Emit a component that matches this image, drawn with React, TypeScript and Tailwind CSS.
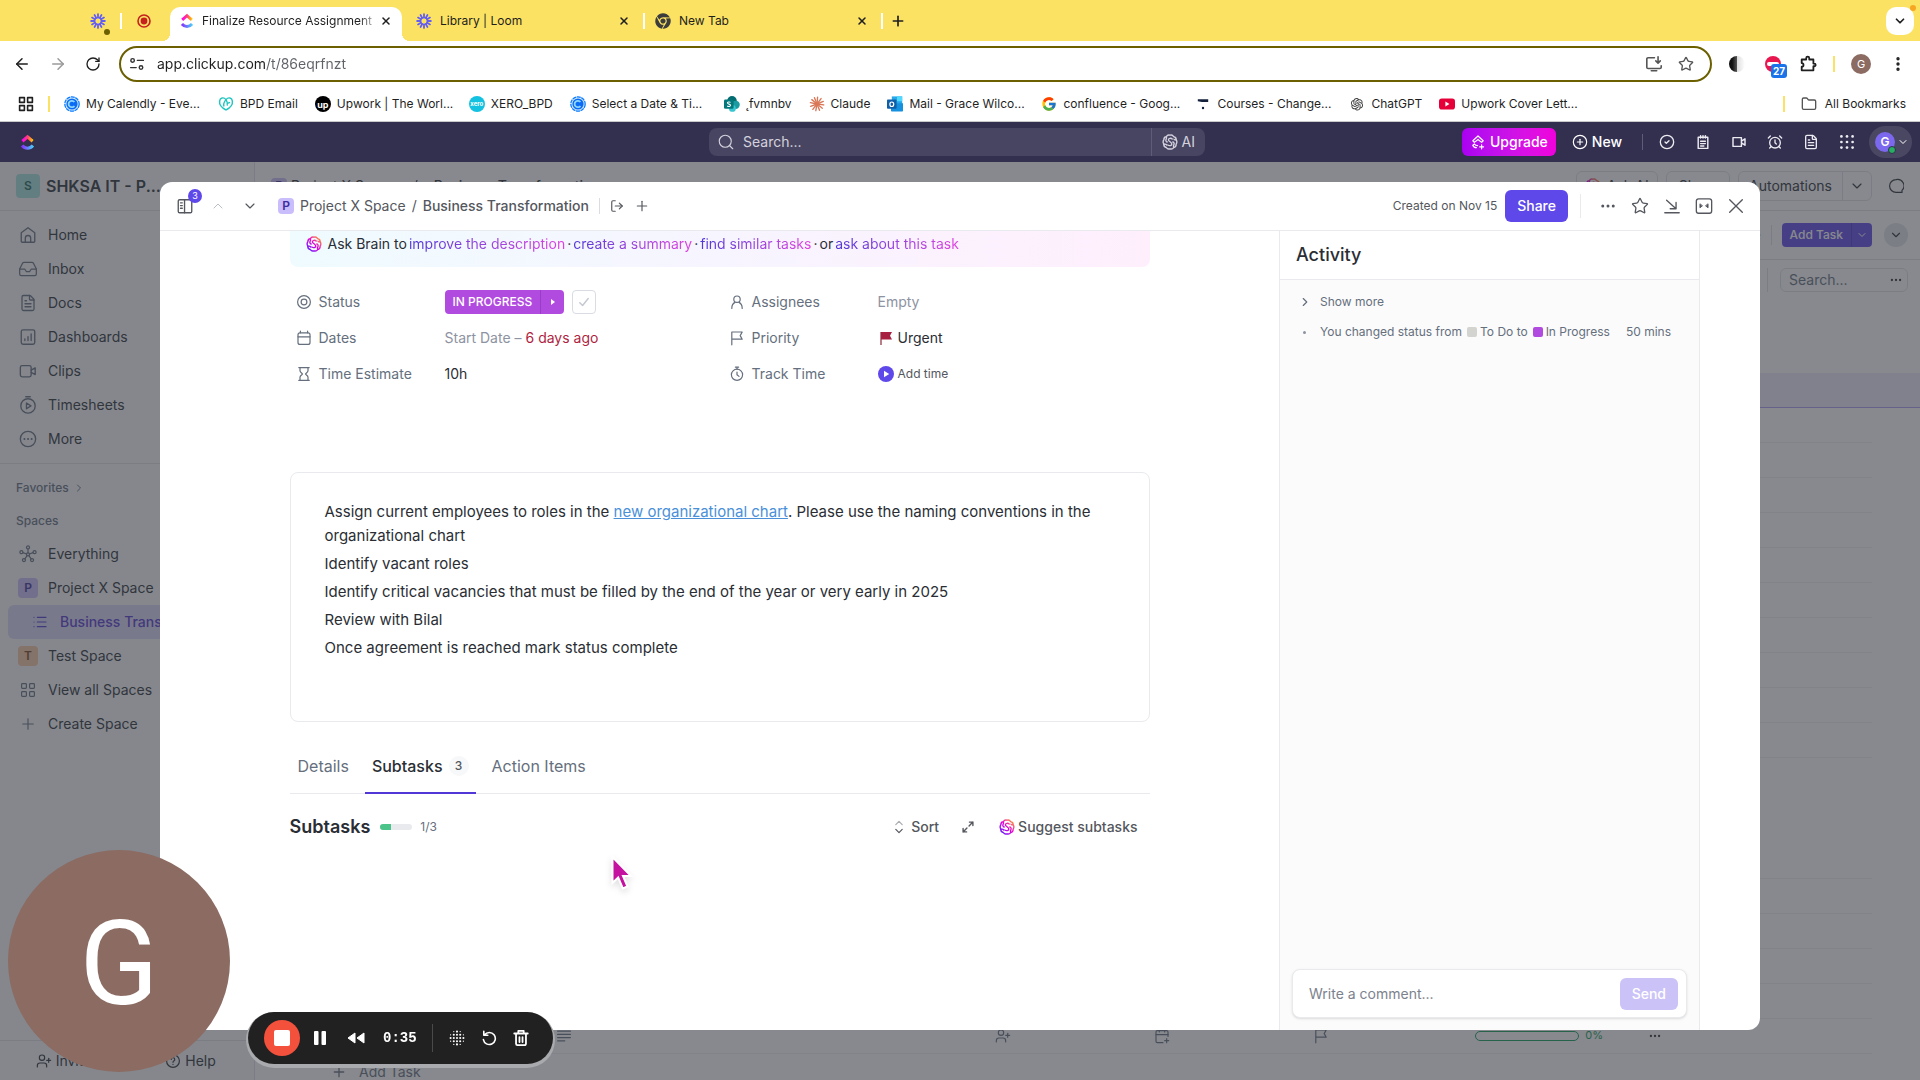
import React from 'react';
import {
  AlarmClock,
  ArrowLeft,
  ArrowRight,
  CalendarPlus,
  ChevronDown,
  ChevronRight,
  ChevronUp,
  CircleCheck,
  CirclePlus,
  Ellipsis,
  EllipsisVertical,
  FileText,
  Folder,
  Inbox,
  List,
  LogOut,
  Plus,
  RotateCw,
  Search,
  Star,
  UserPlus,
  X,
} from 'lucide-react';
import { AiOutlineOpenAI } from 'react-icons/ai';
import { FcGoogle } from 'react-icons/fc';
import { FaChrome } from 'react-icons/fa';

interface IconProps {
  className?: string;
}

interface StrokeIconProps extends IconProps {
  children: React.ReactNode;
  width?: number;
}

const StrokeIcon: React.FC<StrokeIconProps> = ({ className = 'size-4', width = 1.5, children }) => (
  <svg
    viewBox="0 0 20 20"
    fill="none"
    stroke="currentColor"
    strokeWidth={width}
    strokeLinecap="round"
    strokeLinejoin="round"
    className={`shrink-0 ${className}`}
    aria-hidden="true"
  >
    {children}
  </svg>
);

const LoomIcon: React.FC<IconProps> = ({ className = 'size-4' }) => (
  <svg viewBox="0 0 20 20" className={`shrink-0 ${className}`} stroke="#625df5" strokeWidth="2.2" strokeLinecap="round" fill="none" aria-hidden="true">
    {[0, 30, 60, 90, 120, 150, 180, 210, 240, 270, 300, 330].map((angle) => (
      <path key={angle} d="M10 5.6V1.4" transform={`rotate(${angle} 10 10)`} />
    ))}
    <circle cx="10" cy="10" r="4.2" strokeWidth="1.6" />
  </svg>
);

const ClickUpIcon: React.FC<IconProps & { id: string }> = ({ className = 'size-4', id }) => (
  <svg viewBox="0 0 20 24" className={`shrink-0 ${className}`} fill="none" strokeWidth="4.4" aria-hidden="true">
    <defs>
      <linearGradient id={`${id}-top`} x1="0" x2="1">
        <stop offset="0" stopColor="#ff02f0" />
        <stop offset="0.5" stopColor="#ff3d7a" />
        <stop offset="1" stopColor="#ffc800" />
      </linearGradient>
      <linearGradient id={`${id}-bottom`} x1="0" x2="1">
        <stop offset="0" stopColor="#8930fd" />
        <stop offset="1" stopColor="#49ccf9" />
      </linearGradient>
    </defs>
    <path d="M2.8 10.2 10 4l7.2 6.2" stroke={`url(#${id}-top)`} />
    <path d="M2.4 16.4c4.2 5 11 5 15.2 0" stroke={`url(#${id}-bottom)`} />
  </svg>
);

const BrainIcon: React.FC<IconProps & { id?: string }> = ({ className = 'size-4', id }) => {
  const ink = id ? `url(#${id})` : 'currentColor';
  return (
    <svg viewBox="0 0 20 20" className={`shrink-0 ${className}`} fill="none" stroke={ink} strokeWidth="1.7" strokeLinecap="round" strokeLinejoin="round" aria-hidden="true">
      {id && (
        <defs>
          <linearGradient id={id} gradientUnits="userSpaceOnUse" x1="3" y1="17" x2="17" y2="3">
            <stop offset="0" stopColor="#6a1bff" />
            <stop offset="0.5" stopColor="#e300d8" />
            <stop offset="1" stopColor="#ff8a3c" />
          </linearGradient>
        </defs>
      )}
      <path d="M10 1.500c1.800-.6 3.700.3 4.500 1.700 2 .3 3.300 2 3.100 3.900 1.200 1.700 1.200 4 0 5.700.2 2-1 3.700-3 4.100-1 1.500-2.800 2.200-4.600 1.600-1.800.6-3.700-.1-4.600-1.600-2-.4-3.300-2.100-3-4.100-1.200-1.700-1.200-4 0-5.700-.2-1.900 1-3.600 3.100-3.900C6.300 1.800 8.200.9 10 1.500Z" />
      <path d="M12.800 6.200c-1.500-1.500-4.800-1-4.800 1 0 2.300 4.300 2.800 4.300 5.300 0 2-3 2.800-5 1.300" />
      <path d="M5.500 3.500c.5 1.500 0 2.500-.5 3.500s0 2.500 1.500 3M2.500 12.800c1.500-.5 2.700 0 3.500 1M14.500 16.500c-.5-1.500 0-2.500.5-3.500s0-2.500-1.500-3M17.500 7.200c-1.500.5-2.200 0-2.500-.8" />
    </svg>
  );
};

const CalendlyIcon = () => (
  <svg viewBox="0 0 20 20" className="size-4 shrink-0" fill="none" aria-hidden="true">
    <circle cx="10" cy="10" r="9" fill="#d5e9ff" stroke="#0a7cff" strokeWidth="1.6" strokeDasharray="5 0.8" />
    <circle cx="10" cy="10" r="7" fill="#0a6cf5" />
    <path d="M13 7.600a4 4 0 1 0 0 4.800" stroke="#8fd8ff" strokeWidth="2.200" />
  </svg>
);

const GoDaddyIcon = () => (
  <svg viewBox="0 0 20 20" className="size-4 shrink-0" fill="none" stroke="#22c5c0" strokeWidth="1.800" aria-hidden="true">
    <path d="M10 17.500C5 15 1.500 10.500 2 6.500 2.500 2 7 1 10 4.500c1.800 2.500 2 5 1.500 7.500" />
    <path d="M10 17.500c5-2.500 8.500-7 8-11C17.500 2 13 1 10 4.500c-3 3.500-3.500 6-2.500 8.500M15 8l-4 1.500" />
  </svg>
);

const UpworkIcon = () => (
  <span className="flex size-4 shrink-0 items-center justify-center rounded-full bg-black text-[9px] leading-none font-bold text-white">up</span>
);

const XeroIcon = () => (
  <span className="flex size-4 shrink-0 items-center justify-center rounded-full bg-[#13c1e0] text-[6px] leading-none font-bold text-white">xero</span>
);

const SharepointIcon = () => (
  <svg viewBox="0 0 20 20" className="size-4 shrink-0" aria-hidden="true">
    <circle cx="10" cy="6" r="6" fill="#036c70" />
    <circle cx="14.500" cy="11" r="5.200" fill="#1a9ba1" />
    <circle cx="10.500" cy="15.500" r="4.300" fill="#37c6d0" />
    <rect x="0" y="4.500" width="12" height="11.500" rx="1.500" fill="#03787c" />
    <path d="M8.200 8c-1.500-1-4-.6-3.900.8.200 1.600 3.900 1.100 3.900 2.900 0 1.500-2.700 1.800-4.200.8" fill="none" stroke="#fff" strokeWidth="1.400" />
  </svg>
);

const ClaudeIcon = () => (
  <svg viewBox="0 0 20 20" className="size-4 shrink-0" stroke="#d97757" strokeWidth="1.700" strokeLinecap="round" aria-hidden="true">
    {[5, 37, 68, 98, 128, 158, 190, 218, 250, 282, 310, 338].map((angle) => (
      <path key={angle} d="M10 10V1.500" transform={`rotate(${angle} 10 10)`} />
    ))}
  </svg>
);

const OutlookIcon = () => (
  <svg viewBox="0 0 20 20" className="size-4 shrink-0" aria-hidden="true">
    <rect x="6" y="0.500" width="13" height="12" fill="#28a8ea" />
    <rect x="12.500" y="0.500" width="6.500" height="6" fill="#50d9ff" />
    <path d="M5 9.500 20 9v9.500a1 1 0 0 1-1 1H6a1 1 0 0 1-1-1Z" fill="#1490df" />
    <rect x="0" y="4.500" width="12" height="11.500" rx="1" fill="#0f5ea8" />
    <ellipse cx="6" cy="10.300" rx="2.400" ry="2.800" fill="none" stroke="#fff" strokeWidth="1.500" />
  </svg>
);

const CoursesIcon = () => (
  <svg viewBox="0 0 20 20" className="size-4 shrink-0" fill="#14213d" aria-hidden="true">
    <path d="M3.500 4h13v3.500H8.500l-5-1Z" />
    <circle cx="10" cy="15" r="1.500" />
  </svg>
);

const YoutubeIcon = () => (
  <svg viewBox="0 0 20 20" className="size-4 shrink-0" aria-hidden="true">
    <rect x="0" y="3" width="20" height="14" rx="3.500" fill="#e5003a" />
    <path d="m8 7 5 3-5 3Z" fill="#fff" />
  </svg>
);

interface Bookmark {
  label: string;
  icon: React.ReactNode;
  wide?: boolean;
}

const bookmarks: Bookmark[] = [
  { label: 'My Calendly - Eve...', icon: <CalendlyIcon />, wide: true },
  { label: 'BPD Email', icon: <GoDaddyIcon /> },
  { label: 'Upwork | The Worl...', icon: <UpworkIcon />, wide: true },
  { label: 'XERO_BPD', icon: <XeroIcon /> },
  { label: 'Select a Date & Ti...', icon: <CalendlyIcon />, wide: true },
  { label: '˛fvmnbv', icon: <SharepointIcon /> },
  { label: 'Claude', icon: <ClaudeIcon /> },
  { label: 'Mail - Grace Wilco...', icon: <OutlookIcon />, wide: true },
  { label: 'confluence - Goog...', icon: <FcGoogle className="size-4 shrink-0" />, wide: true },
  { label: 'Courses - Change...', icon: <CoursesIcon />, wide: true },
  { label: 'ChatGPT', icon: <AiOutlineOpenAI className="size-4 shrink-0 text-[#444]" /> },
  { label: 'Upwork Cover Lett...', icon: <YoutubeIcon />, wide: true },
];

const CloseTabButton = () => (
  <button type="button" aria-label="Close tab" className="shrink-0">
    <X className="size-3" strokeWidth={3} />
  </button>
);

const TabStrip = () => (
  <div className="flex h-[41px] shrink-0 items-end bg-[#fbe263] text-xs text-[#1f1f1f]">
    <div className="flex h-[34px] w-[170px] items-center justify-end pr-[18px] pb-1.5">
      <button type="button" aria-label="Loom" className="relative">
        <LoomIcon />
        <span className="absolute -right-1 -bottom-1.5 size-1.5 rounded-full bg-[#6b5f00]" />
      </button>
      <span className="ml-[14px] h-4 w-0.5 bg-white" />
      <button type="button" aria-label="Recording" className="ml-[14px]">
        <svg viewBox="0 0 16 16" className="size-4" aria-hidden="true">
          <circle cx="8" cy="8" r="6" fill="none" stroke="#c5221f" strokeWidth="1.600" />
          <circle cx="8" cy="8" r="3.400" fill="#c5221f" />
        </svg>
      </button>
    </div>
    <div className="relative flex h-[34px] w-[232px] items-center rounded-t-[10px] bg-white px-2.5 pb-1.5">
      <span className="absolute bottom-0 -left-2 size-2 bg-[radial-gradient(circle_at_0_0,transparent_8px,#fff_8px)]" />
      <span className="absolute -right-2 bottom-0 size-2 bg-[radial-gradient(circle_at_100%_0,transparent_8px,#fff_8px)]" />
      <button type="button" className="flex min-w-0 flex-1 items-center gap-2">
        <ClickUpIcon id="tab-logo" className="h-4 w-3.5" />
        <span className="flex-1 text-left whitespace-nowrap [mask-image:linear-gradient(90deg,#000_88%,transparent)]">
          Finalize Resource Assignment
        </span>
      </button>
      <CloseTabButton />
    </div>
    <div className="flex h-[34px] w-[241px] items-center pr-[13px] pb-1.5 pl-[14px]">
      <button type="button" className="flex min-w-0 flex-1 items-center gap-2">
        <LoomIcon />
        Library | Loom
      </button>
      <CloseTabButton />
    </div>
    <div className="flex h-[34px] w-[238px] items-center pr-[13px] pb-1.5">
      <span className="h-4 w-0.5 bg-white" />
      <button type="button" className="ml-2.5 flex min-w-0 flex-1 items-center gap-2">
        <FaChrome className="size-4 text-[#3c3c3c]" />
        New Tab
      </button>
      <CloseTabButton />
    </div>
    <div className="flex h-[34px] flex-1 items-center pr-1.5 pb-1.5">
      <span className="h-4 w-0.5 bg-white" />
      <button type="button" aria-label="New tab" className="ml-[7px]">
        <Plus className="size-4" strokeWidth={2.5} />
      </button>
      <button type="button" aria-label="Search tabs" className="relative ml-auto flex size-7 items-center justify-center rounded-[10px] bg-white">
        <ChevronDown className="size-3.5" strokeWidth={3} />
        <span className="absolute -top-0.5 -right-0.5 size-1.5 rounded-full bg-[#f6a623]" />
      </button>
    </div>
  </div>
);

const AddressBar = () => (
  <div className="flex h-[46px] shrink-0 items-center pr-[13px] pl-[13px] text-[#1f1f1f]">
    <div className="flex w-[106px] gap-[18px]">
      <button type="button" aria-label="Back"><ArrowLeft className="size-[18px]" /></button>
      <button type="button" aria-label="Forward"><ArrowRight className="size-[18px] text-[#9a9a9a]" /></button>
      <button type="button" aria-label="Reload"><RotateCw className="size-4" /></button>
    </div>
    <div className="flex h-9 flex-1 items-center rounded-full border-2 border-[#6b5f00] pr-4 pl-2">
      <StrokeIcon className="size-4 text-[#333]" width={1.8}>
        <circle cx="4.500" cy="5.500" r="2.200" />
        <path d="M10.500 5.500H18M2 14.500h7" />
        <circle cx="15" cy="14.500" r="2.200" />
      </StrokeIcon>
      <input
        aria-label="Address"
        defaultValue="app.clickup.com/t/86eqrfnzt"
        className="ml-3 min-w-0 flex-1 bg-[linear-gradient(90deg,#1f1f1f_108px,#5f6368_108px)] bg-clip-text text-sm text-transparent outline-none"
      />
      <button type="button" aria-label="Install app" className="mr-[15px] text-[#555]">
        <StrokeIcon className="size-[18px]" width={1.8}>
          <path d="M10.500 3H3.500A1.500 1.500 0 0 0 2 4.500v9A1.500 1.500 0 0 0 3.500 15h13a1.500 1.500 0 0 0 1.500-1.500V12M7 17.500h6M14.500 2v7m0 0L12 6.500M14.500 9 17 6.500" />
        </StrokeIcon>
      </button>
      <button type="button" aria-label="Bookmark this page" className="text-[#555]"><Star className="size-4" /></button>
    </div>
    <div className="flex items-center pl-[17px]">
      <span className="size-4 rounded-full bg-[linear-gradient(90deg,#111_20%,#555_50%,#ddd_50%,#fff)]" />
      <span className="relative ml-5 size-4 rounded-full bg-[#e9174f]">
        <span className="absolute top-1.5 left-0.5 h-1 w-3 rounded-full bg-white" />
        <span className="absolute top-2 left-1.5 flex h-3.5 w-4 items-center justify-center rounded-[3px] bg-[#1a73e8] text-[10px] font-bold text-white">27</span>
      </span>
      <button type="button" aria-label="Extensions" className="ml-[18px]">
        <StrokeIcon className="size-[18px]" width={2}>
          <path d="M3 5h5V3.500a1.700 1.700 0 0 1 3.400 0V5H16v4.500h1a1.500 1.500 0 0 1 0 3h-1V17H3v-4a2 2 0 0 0 0-4Z" />
        </StrokeIcon>
      </button>
      <span className="ml-4 h-4 w-0.5 bg-[#fbe263]" />
      <span className="ml-4 flex size-5 items-center justify-center rounded-full bg-[#8b6b62] text-[11px] text-white">G</span>
      <button type="button" aria-label="Menu" className="ml-[18px]"><EllipsisVertical className="size-[18px]" strokeWidth={2.5} /></button>
    </div>
  </div>
);

const BookmarksBar = () => (
  <nav aria-label="Bookmarks" className="flex h-[35px] shrink-0 items-center border-b border-[#c9c9c9] pr-[14px] pl-[18px] text-xs text-[#1f1f1f]">
    <StrokeIcon className="size-4" width={2}>
      <path d="M2 2h6v6H2zM12 2h6v6h-6zM2 12h6v6H2zM12 12h6v6h-6z" />
    </StrokeIcon>
    <span className="mx-[14px] h-4 w-0.5 shrink-0 bg-[#fbe263]" />
    {bookmarks.map(({ label, icon, wide }) => (
      <a
        key={label}
        href="#"
        className={wide ? 'flex w-[154px] shrink-0 items-center gap-1.5 whitespace-nowrap' : 'flex shrink-0 items-center gap-1.5 pr-[17px] whitespace-nowrap'}
      >
        {icon}
        {label}
      </a>
    ))}
    <span className="ml-auto h-4 w-0.5 bg-[#fbe263]" />
    <a href="#" className="ml-4 flex items-center gap-2 whitespace-nowrap">
      <Folder className="size-4 text-[#555]" />
      All Bookmarks
    </a>
  </nav>
);

const TopBar = () => (
  <header className="grid h-10 shrink-0 grid-cols-[1fr_496px_1fr] items-center bg-[#332f4f] pr-1.5 text-white">
    <div className="pl-[19px]"><ClickUpIcon id="app-logo" className="size-[17px]" /></div>
    <div className="flex h-7 items-center rounded-lg bg-[#484562] text-[#d4d2de]">
      <Search className="ml-2 size-[18px]" strokeWidth={1.5} />
      <input aria-label="Search" placeholder="Search..." className="ml-2 min-w-0 flex-1 text-sm outline-none placeholder:text-[#d4d2de]" />
      <button type="button" className="flex h-full items-center gap-1 border-l border-[#5f5c78] px-2.5 text-sm">
        <BrainIcon className="size-4" />
        AI
      </button>
    </div>
    <div className="flex items-center justify-end pr-0.5">
      <button type="button" className="flex h-7 items-center gap-1 rounded-md bg-linear-to-r from-[#a900f2] to-[#f000dc] px-2 text-sm font-medium">
        <StrokeIcon className="size-4">
          <path d="m3.500 8.500 6.500-6 6.500 6-2 2L10 6.800l-4.500 3.700ZM8 17c-2.500 0-4-1.500-4.500-3l2-1.500c1 1.500 2 2 4 2M12 16h5M14.500 13.500v5" />
        </StrokeIcon>
        Upgrade
      </button>
      <button type="button" className="ml-4 flex items-center gap-1 text-sm font-medium">
        <CirclePlus className="size-4" strokeWidth={1.75} />
        New
      </button>
      <span className="mr-4 ml-5 h-4 w-px bg-[#5f5c78]" />
      <div className="flex items-center gap-5 text-[#ecebf2]">
        <button type="button" aria-label="Tasks"><CircleCheck className="size-4" /></button>
        <button type="button" aria-label="Notepad">
          <StrokeIcon width={1.8}>
            <path d="M4 4h12v14H4zM7 2v3M10 2v3M13 2v3M7 9h6M7 12h6M7 15h4" />
          </StrokeIcon>
        </button>
        <button type="button" aria-label="Record clip">
          <StrokeIcon width={1.8}>
            <path d="M2.500 4.500h10.500v11H2.500zM13 9l4.500-3v8L13 11" />
          </StrokeIcon>
        </button>
        <button type="button" aria-label="Reminders"><AlarmClock className="size-4" /></button>
        <button type="button" aria-label="Docs"><FileText className="size-4" /></button>
        <button type="button" aria-label="Apps">
          <svg viewBox="0 0 20 20" className="size-4" fill="currentColor" aria-hidden="true">
            {[3, 10, 17].map((y) => [3, 10, 17].map((x) => <circle key={`${x}-${y}`} cx={x} cy={y} r="1.700" />))}
          </svg>
        </button>
      </div>
      <button type="button" aria-label="Account" className="relative ml-[14px] flex h-8 w-[43px] items-center gap-0.5 rounded-full bg-[#4a4762] pl-1.5">
        <span className="flex size-5 items-center justify-center rounded-full bg-[#7b68ee] text-xs font-semibold">G</span>
        <span className="absolute right-4 bottom-1 size-2 rounded-full border border-[#332f4f] bg-[#27ae60]" />
        <ChevronDown className="size-3" />
      </button>
    </div>
  </header>
);

const HomeIcon = () => (
  <StrokeIcon className="size-[18px]">
    <path d="M2.500 7.500 10 2l7.500 5.500V17a1 1 0 0 1-1 1h-13a1 1 0 0 1-1-1Z" />
    <path d="M7 18v-4.500a3 3 0 0 1 6 0V18" />
  </StrokeIcon>
);

const DashboardIcon = () => (
  <StrokeIcon className="size-[18px]">
    <rect x="2.500" y="2" width="15" height="16" rx="2" />
    <path d="M6.500 14v-2M10 14V9.500M13.500 14V6.500" />
  </StrokeIcon>
);

const ClipIcon = () => (
  <StrokeIcon className="size-[18px]">
    <rect x="1.500" y="4" width="12" height="12.500" rx="2" />
    <path d="m13.500 9 4.500-2.500v7.500l-4.500-2.500" />
  </StrokeIcon>
);

const TimesheetIcon = () => (
  <StrokeIcon className="size-[18px]">
    <circle cx="10" cy="11" r="8" />
    <path d="M7.500.8h5M8.300 7.800l5 3.200-5 3.200Z" />
  </StrokeIcon>
);

const MoreIcon = () => (
  <StrokeIcon className="size-[18px]">
    <circle cx="10" cy="10" r="8.500" />
    <path d="M6 10h.1M10 10h.1M14 10h.1" strokeWidth="2.200" />
  </StrokeIcon>
);

const HubIcon = () => (
  <StrokeIcon className="size-[18px]" width={1.4}>
    <circle cx="10" cy="2.700" r="1.700" />
    <circle cx="2.700" cy="8" r="1.700" />
    <circle cx="17.300" cy="8" r="1.700" />
    <circle cx="5.500" cy="16.800" r="1.700" />
    <circle cx="14.500" cy="16.800" r="1.700" />
    <circle cx="10" cy="10.500" r="1.700" />
    <path d="M10 4.500v4.200M4.400 8.500l4 1.500M15.600 8.500l-4 1.500M6.500 15.300l2.500-3.400M13.500 15.300 11 11.900" />
  </StrokeIcon>
);

const FlagIcon: React.FC<IconProps> = ({ className = 'size-4' }) => (
  <StrokeIcon className={className}>
    <path d="M3.500 18.500v-16h13l-2.500 4.500 2.500 4.500h-13" />
  </StrokeIcon>
);

interface SpaceBadgeProps {
  letter: string;
  className: string;
}

const SpaceBadge: React.FC<SpaceBadgeProps> = ({ letter, className }) => (
  <span className={`flex shrink-0 items-center justify-center rounded text-xs font-semibold ${className}`}>{letter}</span>
);

interface NavItemProps {
  icon: React.ReactNode;
  label: string;
}

const NavItem: React.FC<NavItemProps> = ({ icon, label }) => (
  <li>
    <a href="#" className="flex h-[34px] items-center gap-2.5 px-[18px] text-sm text-[#2a2e34]">
      <span className="flex w-5 justify-center text-[#656f7d]">{icon}</span>
      {label}
    </a>
  </li>
);

const Sidebar = () => (
  <aside className="flex w-[255px] shrink-0 flex-col border-r border-[#e0e2e6] bg-[#f9fafc]">
    <div className="flex h-[49px] shrink-0 items-center gap-1.5 border-b border-[#e0e2e6] pl-4">
      <SpaceBadge letter="S" className="size-6 bg-[#a3e3dc] text-[#20665d]" />
      <span className="text-base font-semibold text-[#2a2e34]">SHKSA IT - P...</span>
    </div>
    <nav aria-label="Main" className="flex-1 pt-[7px]">
      <ul>
        <NavItem icon={<HomeIcon />} label="Home" />
        <NavItem icon={<Inbox className="size-5" strokeWidth={1.5} />} label="Inbox" />
        <NavItem icon={<FileText className="size-[18px]" strokeWidth={1.75} />} label="Docs" />
        <NavItem icon={<DashboardIcon />} label="Dashboards" />
        <NavItem icon={<ClipIcon />} label="Clips" />
        <NavItem icon={<TimesheetIcon />} label="Timesheets" />
        <NavItem icon={<MoreIcon />} label="More" />
      </ul>
      <hr className="my-[7px] border-[#e0e2e6]" />
      <h2 className="flex h-[34px] items-center gap-1 pl-4 text-xs font-medium text-[#656f7d]">
        Favorites
        <ChevronRight className="size-3" />
      </h2>
      <h2 className="flex h-8 items-center pl-4 text-xs font-medium text-[#656f7d]">Spaces</h2>
      <ul>
        <NavItem icon={<HubIcon />} label="Everything" />
        <NavItem icon={<SpaceBadge letter="P" className="size-5 bg-[#c9bdfb] text-[#3f2d9c]" />} label="Project X Space" />
        <li>
          <a href="#" className="mx-2 flex h-[34px] items-center gap-3 rounded-md bg-[#dcd6fb] pl-6 text-sm font-medium whitespace-nowrap text-[#5338d0]">
            <List className="size-4" strokeWidth={1.75} />
            Business Transformation
          </a>
        </li>
        <NavItem icon={<SpaceBadge letter="T" className="size-5 bg-[#f8c8a4] text-[#7a4520]" />} label="Test Space" />
        <NavItem
          icon={
            <StrokeIcon>
              <rect x="2" y="2" width="6" height="6" rx="1" />
              <rect x="12" y="2" width="6" height="6" rx="1" />
              <rect x="2" y="12" width="6" height="6" rx="1" />
              <rect x="12" y="12" width="6" height="6" rx="1" />
            </StrokeIcon>
          }
          label="View all Spaces"
        />
        <NavItem icon={<Plus className="size-[18px]" strokeWidth={1.5} />} label="Create Space" />
      </ul>
    </nav>
    <div className="grid h-10 shrink-0 grid-cols-2 items-center border-t border-[#e0e2e6] text-sm text-[#2a2e34]">
      <button type="button" className="flex items-center justify-center gap-1">
        <UserPlus className="size-4" strokeWidth={1.75} />
        Invite
      </button>
      <button type="button" className="flex items-center justify-center gap-1">
        <StrokeIcon>
          <circle cx="10" cy="10" r="8" />
          <path d="M7.800 8a2.200 2.200 0 1 1 3.200 2c-.7.4-1 .8-1 1.600M10 14.200v.1" />
        </StrokeIcon>
        Help
      </button>
    </div>
  </aside>
);

const emptyRows = [0, 1, 2, 3, 4, 5, 6, 7, 8, 9];
const lowerRows = [0, 1, 2, 3, 4];

const ListView = () => (
  <section aria-label="List" className="flex min-w-0 flex-1 flex-col overflow-hidden bg-white text-sm text-[#2a2e34]">
    <div className="flex h-[49px] shrink-0 items-center border-b border-[#e0e2e6] pr-4 pl-4">
      <SpaceBadge letter="P" className="size-4 bg-[#c9bdfb] text-[#3f2d9c]" />
      <span className="ml-1">Project X Space</span>
      <span className="mx-4">/</span>
      <span className="font-medium">Business Transformation</span>
      <button type="button" className="ml-auto flex h-[30px] items-center gap-1.5 rounded-md border border-[#e0e2e6] px-2">
        <BrainIcon id="list-brain" className="size-4" />
        Ask AI
      </button>
      <button type="button" className="ml-2 h-[30px] rounded-md border border-[#e0e2e6] px-3">Share</button>
      <div className="ml-2 flex h-[30px] items-center rounded-md border border-[#e0e2e6]">
        <button type="button" className="px-2.5">Automations</button>
        <button type="button" aria-label="Automation options" className="flex h-full items-center border-l border-[#e0e2e6] px-1.5">
          <ChevronDown className="size-4" strokeWidth={1.75} />
        </button>
      </div>
      <button type="button" aria-label="Chat" className="ml-4">
        <StrokeIcon className="size-4">
          <path d="M10 2a8 8 0 1 0 0 16h7.500v-2.500A8 8 0 0 0 10 2Z" />
        </StrokeIcon>
      </button>
    </div>
    <div className="flex h-[49px] shrink-0 items-center justify-end border-b border-[#e0e2e6] pr-3">
      <span>Hide</span>
      <span className="mx-2.5 h-5 w-px bg-[#e0e2e6]" />
      <button type="button" className="h-6 rounded-l-[4px] bg-[#5f48ea] px-2 text-xs font-medium text-white">Add Task</button>
      <button type="button" aria-label="Add options" className="flex h-6 items-center rounded-r-[4px] border-l border-[#4a37c0] bg-[#5f48ea] px-1 text-white">
        <ChevronDown className="size-3" />
      </button>
      <button type="button" aria-label="More options" className="ml-3 flex size-6 items-center justify-center rounded-full bg-[#e0e3e8]">
        <ChevronDown className="size-3.5" />
      </button>
    </div>
    <div className="flex h-[113px] shrink-0 items-start justify-end pt-2 pr-3">
      <span className="mx-3 h-6 w-px bg-[#e0e2e6]" />
      <div className="flex h-6 w-[128px] items-center rounded-md border border-[#e0e2e6] pr-1 pl-2">
        <input aria-label="Search tasks" placeholder="Search..." className="min-w-0 flex-1 outline-none placeholder:text-[#656f7d]" />
        <Ellipsis className="size-3.5" />
      </div>
    </div>
    <div className="h-[35px] shrink-0 border-b border-[#a99cf5] bg-[#eeebfd]" />
    <div className="shrink-0 pr-12 pb-[86px]">
      {emptyRows.map((row) => (
        <div key={row} className="h-[35px] border-b border-[#f0f1f3]" />
      ))}
    </div>
    <div className="shrink-0 pr-12">
      {lowerRows.map((row) => (
        <div key={row} className="h-[35px] border-b border-[#f0f1f3]" />
      ))}
      <div className="flex h-[35px] items-center border-b border-[#f0f1f3] text-[#656f7d]">
        <div className="flex flex-1 justify-between pr-[206px] pl-[301px]">
          <StrokeIcon className="size-4">
            <path d="M2 4h16M2 8h16M2 12h16M2 16h9" />
          </StrokeIcon>
          <div className="flex gap-[143px]">
            <UserPlus className="size-4" strokeWidth={1.75} />
            <CalendarPlus className="size-4" strokeWidth={1.75} />
            <FlagIcon />
          </div>
        </div>
        <span className="-ml-[60px] h-2.5 w-[104px] rounded-full border border-[#0f9d58]" />
        <span className="ml-1.5 text-[11px] text-[#0f9d58]">0%</span>
        <Ellipsis className="mr-[210px] ml-[45px] size-3.5 text-[#2a2e34]" />
      </div>
      <button type="button" className="flex h-9 items-center gap-3 pl-[76px] text-[#656f7d]">
        <Plus className="size-4" />
        Add Task
      </button>
    </div>
  </section>
);

const TargetIcon = () => (
  <StrokeIcon>
    <circle cx="10" cy="10" r="8" />
    <circle cx="10" cy="10" r="3.600" />
  </StrokeIcon>
);

const CalendarIcon = () => (
  <StrokeIcon>
    <rect x="2.500" y="3.500" width="15" height="14.500" rx="2.500" />
    <path d="M2.500 8.500h15M5.500 1.500v2M14.500 1.500v2" />
  </StrokeIcon>
);

const HourglassIcon = () => (
  <StrokeIcon>
    <path d="M3.500 2h13M3.500 18h13M5 2v4c0 2 3 3 3 4s-3 2-3 4v4M15 2v4c0 2-3 3-3 4s3 2 3 4v4" />
  </StrokeIcon>
);

const PersonIcon = () => (
  <StrokeIcon>
    <circle cx="10" cy="6.500" r="4" />
    <path d="M3.500 18c0-4 2-6.500 4-7.500M16.500 18c0-4-2-6.500-4-7.500" />
  </StrokeIcon>
);

const StopwatchIcon = () => (
  <StrokeIcon>
    <circle cx="10" cy="11" r="7" />
    <path d="M8 1.500h4M10 2v2M10 7.500V11l2.500 2" />
  </StrokeIcon>
);

interface FieldProps {
  icon: React.ReactNode;
  label: string;
  children: React.ReactNode;
}

const Field: React.FC<FieldProps> = ({ icon, label, children }) => (
  <div className="grid h-9 grid-cols-[149px_1fr] items-center">
    <dt className="flex items-center gap-[7px] text-[#656f7d]">
      {icon}
      {label}
    </dt>
    <dd className="flex items-center text-[#2a2e34]">{children}</dd>
  </div>
);

const BrainLink: React.FC<{ label: string }> = ({ label }) => (
  <a href="#" className="bg-linear-to-r from-[#5137d6] to-[#e040e0] bg-clip-text text-transparent">{label}</a>
);

const TaskHeader = () => (
  <div className="flex h-[49px] shrink-0 items-center border-b border-[#e8eaed] pr-[15px] pl-4 text-[#54575d]">
    <button type="button" aria-label="Open sidebar" className="relative">
      <StrokeIcon className="size-[18px]">
        <rect x="2.500" y="3" width="15" height="14.500" rx="1.500" />
        <path d="M9.500 3v14.500M5 6.500h2M5 9.500h2M5 12.500h2" />
      </StrokeIcon>
      <span className="absolute -top-2 -right-2 flex size-3.5 items-center justify-center rounded-full bg-[#5f48ea] text-[9px] text-white">3</span>
    </button>
    <button type="button" aria-label="Previous task" className="ml-4 text-[#b9bec7]"><ChevronUp className="size-4" strokeWidth={1.5} /></button>
    <button type="button" aria-label="Next task" className="ml-4"><ChevronDown className="size-4" strokeWidth={1.75} /></button>
    <SpaceBadge letter="P" className="ml-5 size-4 bg-[#c9bdfb] text-[#3f2d9c]" />
    <nav aria-label="Breadcrumb" className="ml-1.5 flex text-sm">
      <a href="#">Project X Space</a>
      <span className="mx-1.5">/</span>
      <a href="#" className="font-medium">Business Transformation</a>
    </nav>
    <span className="mx-2.5 h-4 w-px bg-[#d9dce1]" />
    <button type="button" aria-label="Move task"><LogOut className="size-3.5" /></button>
    <button type="button" aria-label="Add" className="ml-2.5"><Plus className="size-4" strokeWidth={1.75} /></button>
    <span className="ml-auto text-xs">Created on Nov 15</span>
    <button type="button" className="ml-2 h-8 rounded-md bg-[#5f48ea] px-3 text-sm font-medium text-white">Share</button>
    <span className="mx-3 h-6 w-px bg-[#e8eaed]" />
    <div className="flex gap-[14px] pl-1.5">
      <button type="button" aria-label="Task options"><Ellipsis className="size-[18px]" /></button>
      <button type="button" aria-label="Favorite"><Star className="size-[18px]" strokeWidth={1.75} /></button>
      <button type="button" aria-label="Minimize">
        <StrokeIcon className="size-[18px]">
          <path d="M4 3.500 14.500 13M14.500 6v7H8M2 17.500h16" />
        </StrokeIcon>
      </button>
      <button type="button" aria-label="Change layout">
        <StrokeIcon className="size-[18px]">
          <rect x="1.500" y="2" width="17" height="16" rx="2.500" />
          <path d="M5.500 8v4l2.500-2ZM14.500 8v4L12 10Z" fill="currentColor" strokeWidth="1" />
        </StrokeIcon>
      </button>
      <button type="button" aria-label="Close">
        <StrokeIcon className="size-[18px]">
          <path d="m3 3 14 14M17 3 3 17" />
        </StrokeIcon>
      </button>
    </div>
  </div>
);

const TaskDetails = () => (
  <div className="min-w-0 flex-1">
    <div className="mx-auto w-full max-w-[860px] text-sm">
      <div className="flex h-9 items-start gap-0.5 rounded-b-lg bg-linear-to-r from-[#effbff] via-[#f7f5ff] to-[#ffeffd] pt-[3px] pl-4 text-[#2a2e34]">
        <BrainIcon id="banner-brain" className="mt-0.5 mr-1 size-4" />
        <span>Ask Brain to</span>
        <BrainLink label="improve the description" />
        <span>·</span>
        <BrainLink label="create a summary" />
        <span>·</span>
        <BrainLink label="find similar tasks" />
        <span>·</span>
        <span>or</span>
        <BrainLink label="ask about this task" />
      </div>

      <dl className="mt-[17px] grid grid-cols-[433px_1fr] pl-1.5">
        <Field icon={<TargetIcon />} label="Status">
          <button type="button" className="h-6 rounded-l-[4px] bg-[#b14be0] px-2 text-xs font-medium text-white">IN PROGRESS</button>
          <button type="button" aria-label="Next status" className="flex size-6 items-center justify-center rounded-r-[4px] border-l border-[#9a3cc8] bg-[#b14be0]">
            <svg viewBox="0 0 8 8" className="size-2" fill="#fff" aria-hidden="true"><path d="M2 1v6l4-3Z" /></svg>
          </button>
          <button type="button" aria-label="Mark complete" className="ml-2 flex size-6 items-center justify-center rounded-[4px] border border-[#d9dce1] text-[#c3c7cf]">
            <StrokeIcon className="size-3.5" width={2}><path d="m4 11 4 4 8-10" /></StrokeIcon>
          </button>
        </Field>
        <Field icon={<PersonIcon />} label="Assignees">
          <span className="text-[#8d93a1]">Empty</span>
        </Field>
        <Field icon={<CalendarIcon />} label="Dates">
          <span className="text-[#8d93a1]">Start Date –</span>
          <span className="ml-1 text-[#b01f3f]">6 days ago</span>
        </Field>
        <Field icon={<FlagIcon />} label="Priority">
          <svg viewBox="0 0 16 16" className="size-4" aria-hidden="true">
            <path d="M3 15V2" stroke="#8a2a3a" strokeWidth="1.200" />
            <path d="M3 2h11l-2 3.800L14 9.500H3Z" fill="#a8203f" />
          </svg>
          <span className="ml-1">Urgent</span>
        </Field>
        <Field icon={<HourglassIcon />} label="Time Estimate">10h</Field>
        <Field icon={<StopwatchIcon />} label="Track Time">
          <button type="button" className="flex items-center gap-1 text-xs text-[#54575d]">
            <svg viewBox="0 0 16 16" className="size-4" aria-hidden="true">
              <circle cx="8" cy="8" r="8" fill="#5f48ea" />
              <path d="m6 4.800 5.200 3.200L6 11.200Z" fill="#fff" />
            </svg>
            Add time
          </button>
        </Field>
      </dl>

      <div className="mt-20 h-[250px] space-y-1 rounded-lg border border-[#e8eaed] px-[34px] pt-[27px] text-[15px] leading-6 text-[#2a2e34]">
        <p>
          Assign current employees to roles in the{' '}
          <a href="#" className="text-[#4a90d9] underline">new organizational chart</a>. Please use the naming conventions in the organizational chart
        </p>
        <p>Identify vacant roles</p>
        <p>Identify critical vacancies that must be filled by the end of the year or very early in 2025</p>
        <p>Review with Bilal</p>
        <p>Once agreement is reached mark status complete</p>
      </div>

      <div role="tablist" className="mt-4 flex h-14 border-b border-[#e8eaed] text-base text-[#656f7d]">
        <button type="button" role="tab" aria-selected="false" className="px-2">Details</button>
        <button type="button" role="tab" aria-selected="true" className="relative ml-2 flex items-center px-[7px] font-medium text-[#2a2e34]">
          Subtasks
          <span className="ml-1.5 flex size-5 items-center justify-center rounded-full bg-[#f7f8f9] text-xs text-[#54575d]">3</span>
          <span className="absolute inset-x-0 -bottom-px h-0.5 bg-[#5137d6]" />
        </button>
        <button type="button" role="tab" aria-selected="false" className="ml-2 px-2">Action Items</button>
      </div>

      <div className="mt-[13px] flex h-10 items-center text-[#54575d]">
        <h2 className="text-lg font-semibold text-[#2a2e34]">Subtasks</h2>
        <span className="ml-2.5 h-1.5 w-8 overflow-hidden rounded-full bg-[#e8eaed]">
          <span className="block h-full w-1/3 bg-[#4bc48a]" />
        </span>
        <span className="ml-2 text-xs text-[#656f7d]">1/3</span>
        <button type="button" className="ml-auto flex items-center gap-1 font-medium">
          <StrokeIcon className="size-4">
            <path d="m6 7 4-4 4 4" opacity="0.500" />
            <path d="m6 13 4 4 4-4" />
          </StrokeIcon>
          Sort
        </button>
        <button type="button" aria-label="Expand" className="ml-[22px]">
          <StrokeIcon className="size-3.5" width={2}>
            <path d="M12 3h5v5M17 3l-5.500 5.500M8 17H3v-5M3 17l5.500-5.500" />
          </StrokeIcon>
        </button>
        <button type="button" className="mr-3 ml-6 flex items-center gap-[3px] font-medium">
          <BrainIcon id="suggest-brain" className="size-4" />
          Suggest subtasks
        </button>
      </div>
    </div>
  </div>
);

const ActivityPanel = () => (
  <aside className="mr-[60px] flex w-[421px] shrink-0 flex-col border-x border-[#e8eaed] bg-[#fbfbfb] text-xs text-[#656f7d]">
    <h2 className="flex h-[49px] shrink-0 items-center border-b border-[#e8eaed] bg-white pl-4 text-lg font-medium text-[#2a2e34]">Activity</h2>
    <div className="flex-1 pt-[7px]">
      <button type="button" className="flex h-[30px] items-center gap-2 pl-[18px]">
        <ChevronRight className="size-[14px]" />
        Show more
      </button>
      <div className="flex h-[30px] items-center pl-[23px] whitespace-nowrap">
        <span className="size-[3px] rounded-full bg-[#8d93a1]" />
        <span className="ml-[14px]">You changed status from</span>
        <span className="mr-[3px] ml-[5px] size-2.5 rounded-[2px] bg-[#d3d3d0]" />
        <span>To Do to</span>
        <span className="mr-[3px] ml-[5px] size-2.5 rounded-[2px] bg-[#b14be0]" />
        <span>In Progress</span>
        <span className="ml-auto pr-7">50 mins</span>
      </div>
    </div>
    <div className="mx-3 mb-3 flex h-[49px] shrink-0 items-center rounded-lg border border-[#e8eaed] bg-white pr-2 pl-4 shadow-sm">
      <input aria-label="Comment" placeholder="Write a comment..." className="min-w-0 flex-1 text-sm outline-none placeholder:text-[#7c828d]" />
      <button type="button" className="h-8 rounded-md bg-[#cbc3f7] px-3 text-sm font-medium text-white">Send</button>
    </div>
  </aside>
);

const TaskModal = () => (
  <div className="absolute inset-0 flex bg-[#373a42]/60 px-40 pt-5 pb-[50px]">
    <div role="dialog" aria-label="Task" className="flex min-w-0 flex-1 flex-col overflow-hidden rounded-xl bg-white">
      <TaskHeader />
      <div className="flex min-h-0 flex-1">
        <TaskDetails />
        <ActivityPanel />
      </div>
    </div>
  </div>
);

const RecorderControls = () => (
  <div className="fixed bottom-4 left-[248px] flex h-[52px] w-[305px] items-center rounded-full bg-[#212121] pl-4 text-white shadow-[0_2px_0_2px_#a9aaad]">
    <button type="button" aria-label="Stop recording" className="flex size-9 items-center justify-center rounded-full bg-[#f4513d]">
      <span className="size-4 rounded-[2px] bg-white" />
    </button>
    <button type="button" aria-label="Pause" className="ml-3">
      <svg viewBox="0 0 16 16" className="size-4" fill="currentColor" aria-hidden="true">
        <rect x="2" y="1" width="4.500" height="14" rx="1" />
        <rect x="9.500" y="1" width="4.500" height="14" rx="1" />
      </svg>
    </button>
    <button type="button" aria-label="Rewind" className="ml-[18px]">
      <svg viewBox="0 0 20 16" className="h-4 w-5" fill="currentColor" stroke="currentColor" strokeLinejoin="round" aria-hidden="true">
        <path d="M9 3v10L2 8ZM18 3v10l-7-5Z" />
      </svg>
    </button>
    <time className="ml-[17px] font-['Liberation_Mono',monospace] text-sm font-bold">0:35</time>
    <span className="ml-[15px] h-7 w-px bg-[#4a4a4a]" />
    <button type="button" aria-label="Effects" className="ml-4">
      <svg viewBox="0 0 20 20" className="size-4" fill="currentColor" aria-hidden="true">
        {[2, 6, 10, 14, 18].map((y) =>
          [2, 6, 10, 14, 18].map((x) => {
            const distance = Math.abs(x - 10) + Math.abs(y - 10);
            return distance > 12 ? null : <circle key={`${x}-${y}`} cx={x} cy={y} r={distance > 8 ? 0.8 : 1.3} />;
          }),
        )}
      </svg>
    </button>
    <button type="button" aria-label="Restart" className="ml-4">
      <StrokeIcon className="size-4" width={2}>
        <path d="M4.500 6A7.500 7.500 0 1 1 3 12M8.500 6.500h-5v-5" />
      </StrokeIcon>
    </button>
    <button type="button" aria-label="Delete recording" className="ml-[15px]">
      <StrokeIcon className="size-[18px]" width={2}>
        <path d="M2.500 5h15M7 4.500V2h6v2.500M4.500 5v11.500A1.500 1.500 0 0 0 6 18h8a1.500 1.500 0 0 0 1.500-1.500V5M8.300 9v5.500M11.700 9v5.500" />
      </StrokeIcon>
    </button>
  </div>
);

const RecorderAvatar = () => (
  <div className="fixed bottom-2 left-2 flex size-[222px] items-center justify-center rounded-full bg-[#8b6b62] pt-1.5 font-[Roboto,sans-serif] text-[116px] leading-none text-white">
    G
  </div>
);

const Pointer = () => (
  <svg viewBox="0 0 24 38" className="pointer-events-none fixed top-[854px] left-[610px] h-[38px] w-6 drop-shadow-md" aria-hidden="true">
    <path d="M2.500 3v26l5.700-5.500 4.600 11 4.700-2-4.500-10.500H21Z" fill="#c4119f" stroke="#fff" strokeWidth="2" />
  </svg>
);

export default function App() {
  return (
    <div className="flex h-screen flex-col overflow-hidden bg-white font-['Inter',sans-serif]">
      <TabStrip />
      <AddressBar />
      <BookmarksBar />
      <TopBar />
      <main className="relative flex min-h-0 flex-1">
        <Sidebar />
        <ListView />
        <TaskModal />
      </main>
      <RecorderAvatar />
      <RecorderControls />
      <Pointer />
    </div>
  );
}
